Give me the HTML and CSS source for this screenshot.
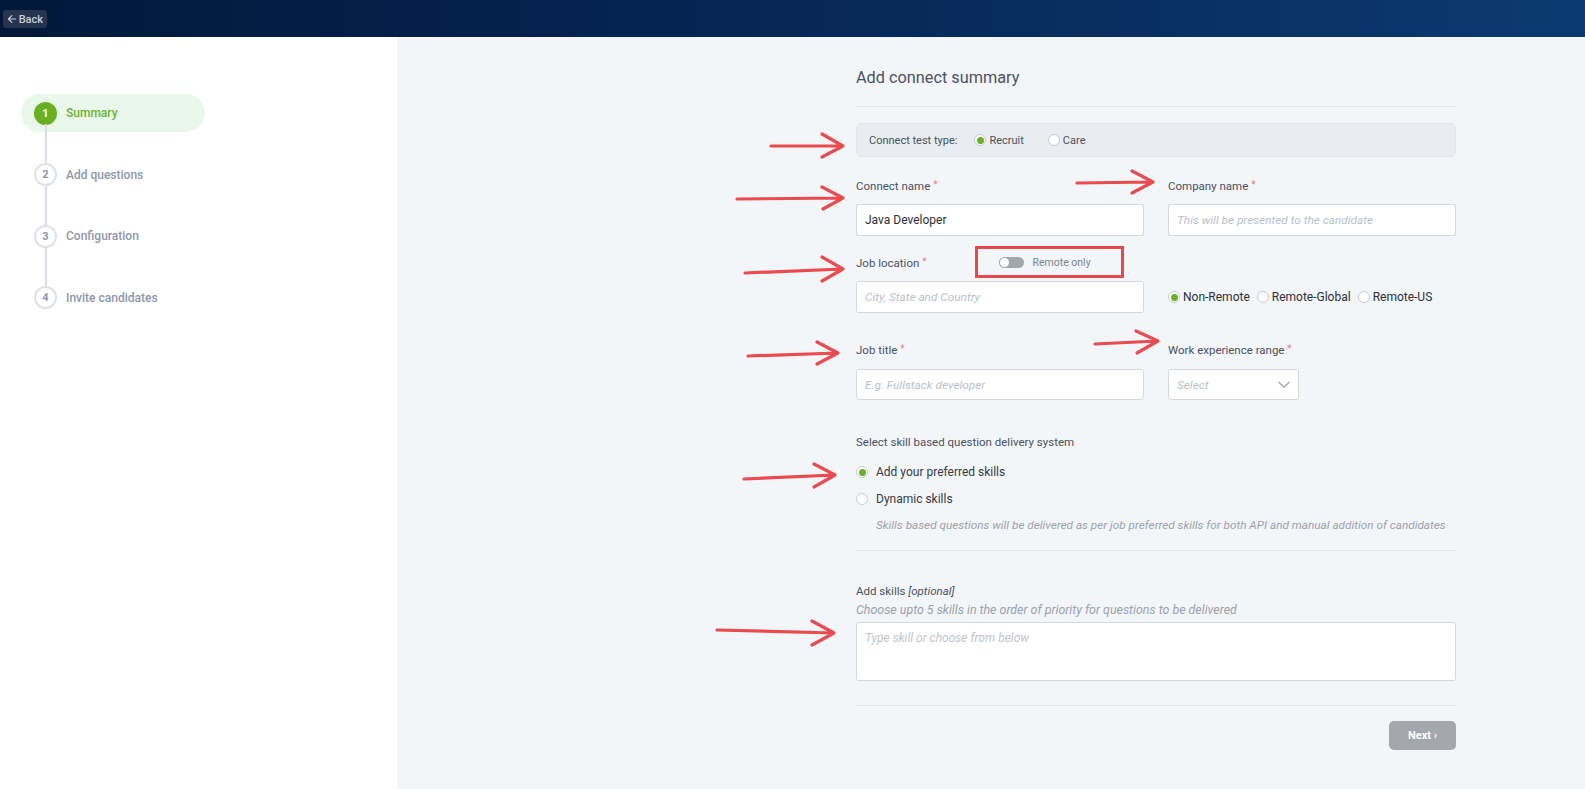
FILE: index.html
```html
<!DOCTYPE html>
<html lang="en">
<head>
<meta charset="utf-8">
<title>Add connect summary</title>
<link rel="stylesheet" href="styles.css">
</head>
<body>
<header class="topbar">
  <button class="back">
    <svg class="back-icon" viewBox="0 0 10 10" width="10" height="10"><path d="M5 1.5 L1.5 5 L5 8.5 M1.5 5 H9" fill="none" stroke="currentColor" stroke-width="1.2" stroke-linecap="round" stroke-linejoin="round"/></svg>
    <span>Back</span>
  </button>
</header>
<div class="layout">
  <aside class="sidebar">
    <ol class="steps">
      <li class="step active"><span class="num">1</span><span class="step-label">Summary</span></li>
      <li class="step"><span class="num">2</span><span class="step-label">Add questions</span></li>
      <li class="step"><span class="num">3</span><span class="step-label">Configuration</span></li>
      <li class="step last"><span class="num">4</span><span class="step-label">Invite candidates</span></li>
    </ol>
  </aside>
  <main class="main">
    <div class="content">
      <h1 class="title">Add connect summary</h1>

      <div class="testtype">
        <span class="tt-label">Connect test type:</span>
        <span class="opt"><span class="radio checked"></span>Recruit</span>
        <span class="opt opt-care"><span class="radio"></span>Care</span>
      </div>

      <div class="grid row1">
        <div class="field">
          <label class="lbl">Connect name <span class="req">*</span></label>
          <div class="input value">Java Developer</div>
        </div>
        <div class="field">
          <label class="lbl">Company name <span class="req">*</span></label>
          <div class="input ph">This will be presented to the candidate</div>
        </div>
      </div>

      <div class="grid row2">
        <div class="field">
          <div class="loc-head">
            <label class="lbl">Job location <span class="req">*</span></label>
            <div class="remote-box">
              <span class="toggle"><span class="knob"></span></span>
              <span class="remote-text">Remote only</span>
            </div>
          </div>
          <div class="input ph loc-input">City, State and Country</div>
        </div>
        <div class="field loc-radios">
          <span class="ropt"><span class="radio checked"></span>Non-Remote</span>
          <span class="ropt"><span class="radio"></span>Remote-Global</span>
          <span class="ropt"><span class="radio"></span>Remote-US</span>
        </div>
      </div>

      <div class="grid row3">
        <div class="field">
          <label class="lbl">Job title <span class="req">*</span></label>
          <div class="input ph">E.g. Fullstack developer</div>
        </div>
        <div class="field">
          <label class="lbl">Work experience range <span class="req">*</span></label>
          <div class="input ph select">Select
            <svg class="chev" viewBox="0 0 12 8" width="12" height="8"><path d="M1 1.5 L6 6 L11 1.5" fill="none" stroke="#a3a9b2" stroke-width="1.5" stroke-linecap="round" stroke-linejoin="round"/></svg>
          </div>
        </div>
      </div>

      <section class="delivery">
        <p class="sec-title">Select skill based question delivery system</p>
        <div class="dopt first"><span class="radio checked"></span>Add your preferred skills</div>
        <div class="dopt"><span class="radio"></span>Dynamic skills</div>
        <p class="note">Skills based questions will be delivered as per job preferred skills for both API and manual addition of candidates</p>
      </section>

      <section class="skills">
        <p class="sec-title">Add skills <em>[optional]</em></p>
        <p class="hint">Choose upto 5 skills in the order of priority for questions to be delivered</p>
        <div class="textarea">Type skill or choose from below</div>
      </section>

      <div class="actions">
        <button class="next">Next ›</button>
      </div>
    </div>
  </main>
</div>

<svg class="annotations" width="1585" height="789" viewBox="0 0 1585 789">
  <g fill="none" stroke="#ea4b4f" stroke-width="3.2" stroke-linecap="round" stroke-linejoin="round">
    <path d="M771 146 L843 146 M822 134 L843 146 L822 157"/>
    <path d="M737 199 L843 198 M822 187 L843 198 L823 209"/>
    <path d="M745 273 L843 269 M822 257 L843 269 L822 281"/>
    <path d="M1077 183 L1153 182 M1132 171 L1153 182 L1132 193"/>
    <path d="M748 356 L838 353 M817 342 L838 353 L817 364"/>
    <path d="M1095 344 L1158 341 M1136 331 L1158 341 L1137 353"/>
    <path d="M744 479 L835 475 M814 464 L835 475 L814 487"/>
    <path d="M717 630 L834 633 M812 621 L834 633 L812 645"/>
  </g>
</svg>
</body>
</html>
```
FILE: styles.css
```css
* { box-sizing: border-box; }
html, body { margin: 0; padding: 0; }
body {
  width: 1585px;
  height: 789px;
  overflow: hidden;
  font-family: Roboto, "Noto Sans", "Liberation Sans", sans-serif;
  color: #4a5060;
  position: relative;
  background: #f3f6f9;
}

.topbar {
  height: 37px;
  background: linear-gradient(90deg, #01183a 0%, #062554 45%, #0c3a70 100%);
  padding: 10px 3px 0;
  display: flex;
  align-items: flex-start;
}
.back {
  height: 18px;
  width: 44px;
  border: 0;
  border-radius: 3px;
  background: #25354f;
  color: #c7cfdb;
  font-family: Roboto, sans-serif;
  font-size: 11px;
  font-weight: 500;
  display: flex;
  align-items: center;
  gap: 2px;
  padding: 0 4px;
}
.back-icon { display: block; }

.layout { display: flex; height: 752px; }
.sidebar {
  width: 397px;
  background: #fff;
  padding: 57px 0 0 21px;
}
.steps { list-style: none; margin: 0; padding: 0; }
.step {
  position: relative;
  display: flex;
  align-items: center;
  height: 38px;
  width: 184px;
  padding-left: 13px;
  margin-bottom: 23.5px;
  border-radius: 19px;
}
.step .num {
  width: 23px;
  height: 23px;
  border-radius: 50%;
  border: 2px solid #dde2ea;
  background: #fff;
  color: #8d96a8;
  font-size: 11px;
  font-weight: 700;
  display: flex;
  align-items: center;
  justify-content: center;
  flex: none;
}
.step .step-label {
  margin-left: 9px;
  font-size: 12px;
  font-weight: 500;
  color: #8e97ab;
}
.step::after {
  content: "";
  position: absolute;
  left: 23.5px;
  top: 30px;
  width: 2px;
  height: 47px;
  background: #d8dde6;
}
.step.last::after { display: none; }
.step.active { background: #eaf8ec; }
.step.active .num {
  background: #6ab023;
  border-color: #6ab023;
  color: #fff;
}
.step.active .step-label { color: #6cb12a; }

.main { flex: 1; background: #f3f6f9; }
.content {
  width: 600px;
  margin-left: 459px;
  padding-top: 30px;
}
.title {
  margin: 0;
  font-size: 16.3px;
  line-height: 22px;
  font-weight: 400;
  color: #4b5161;
  padding-bottom: 17px;
  border-bottom: 1px solid #e2e6eb;
}

.testtype {
  margin-top: 16px;
  height: 34px;
  background: #e9edf1;
  border: 1px solid #e1e5ea;
  border-radius: 6px;
  padding-left: 12px;
  display: flex;
  align-items: center;
  font-size: 11px;
  color: #4a5060;
}
.tt-label { margin-right: 17px; }
.opt { display: flex; align-items: center; }
.opt-care { margin-left: 24px; }

.radio {
  width: 12px;
  height: 12px;
  border-radius: 50%;
  border: 1px solid #c6cbd2;
  background: #fff;
  flex: none;
  margin-right: 3px;
  position: relative;
  display: inline-block;
}
.radio.checked::after {
  content: "";
  position: absolute;
  left: 1.5px;
  top: 1.5px;
  width: 7px;
  height: 7px;
  border-radius: 50%;
  background: #6ab023;
}

.grid {
  display: grid;
  grid-template-columns: 288px 288px;
  column-gap: 24px;
}
.row1 { margin-top: 20px; }
.row2 { margin-top: 10px; }
.row3 { margin-top: 28px; }

.lbl {
  display: block;
  font-size: 11.5px;
  line-height: 16px;
  color: #4a5060;
}
.req { color: #f07b7b; font-size: 10px; vertical-align: 2px; }
.input {
  height: 32px;
  margin-top: 10px;
  background: #fff;
  border: 1px solid #d3d8df;
  border-radius: 3px;
  padding-left: 8px;
  display: flex;
  align-items: center;
  font-size: 12px;
}
.input.value { color: #2b2f38; }
.input.ph { color: #b9bfc8; font-style: italic; font-size: 11.8px; }
.row3 .input { margin-top: 11px; height: 31px; }
.select { width: 131px; position: relative; justify-content: space-between; padding-right: 8px; }
.chev { display: block; }

.loc-head { display: flex; align-items: center; height: 32px; }
.remote-box {
  margin-left: 49px;
  width: 149px;
  height: 32px;
  border: 3px solid #e8474c;
  display: flex;
  align-items: center;
  padding-left: 21px;
}
.toggle {
  width: 25px;
  height: 11px;
  border-radius: 6px;
  background: #a2a7ae;
  position: relative;
  display: inline-block;
}
.knob {
  position: absolute;
  left: 1px;
  top: 1px;
  width: 9px;
  height: 9px;
  border-radius: 50%;
  background: #fff;
}
.remote-text { margin-left: 8px; font-size: 10.5px; color: #7c828c; }
.loc-input { margin-top: 3px; }
.loc-radios {
  display: flex;
  align-items: center;
  align-self: end;
  height: 32px;
  font-size: 12px;
  color: #2b2f38;
}
.ropt { display: flex; align-items: center; margin-right: 7px; }
.ropt .radio { margin-right: 3px; }

.delivery {
  margin-top: 34px;
  padding-bottom: 17px;
  border-bottom: 1px solid #e2e6eb;
}
.sec-title {
  margin: 0;
  font-size: 11.5px;
  line-height: 16px;
  color: #4a5060;
}
.sec-title em { font-style: italic; }
.dopt {
  display: flex;
  align-items: center;
  height: 20px;
  margin-top: 7px;
  font-size: 12px;
  color: #353a44;
}
.dopt.first { margin-top: 12px; }
.dopt .radio { margin-right: 8px; }
.note {
  margin: 8px 0 0 20px;
  font-size: 11.75px;
  line-height: 16px;
  font-style: italic;
  color: #9ba1aa;
}

.skills { margin-top: 32px; }
.hint {
  margin: 3px 0 0;
  font-size: 12.4px;
  line-height: 16px;
  font-style: italic;
  color: #9ba1aa;
}
.textarea {
  margin-top: 4px;
  height: 59px;
  background: #fff;
  border: 1px solid #d3d8df;
  border-radius: 3px;
  padding: 8px 8px;
  font-size: 12px;
  font-style: italic;
  color: #bfc4cc;
}

.actions {
  margin-top: 24px;
  border-top: 1px solid #e2e6eb;
  padding-top: 15px;
  display: flex;
  justify-content: flex-end;
}
.next {
  width: 67px;
  height: 29px;
  border: 0;
  border-radius: 5px;
  background: #a4a8ae;
  color: #fff;
  font-family: Roboto, sans-serif;
  font-size: 11px;
  font-weight: 700;
}

.annotations {
  position: absolute;
  left: 0;
  top: 0;
  pointer-events: none;
}
```
